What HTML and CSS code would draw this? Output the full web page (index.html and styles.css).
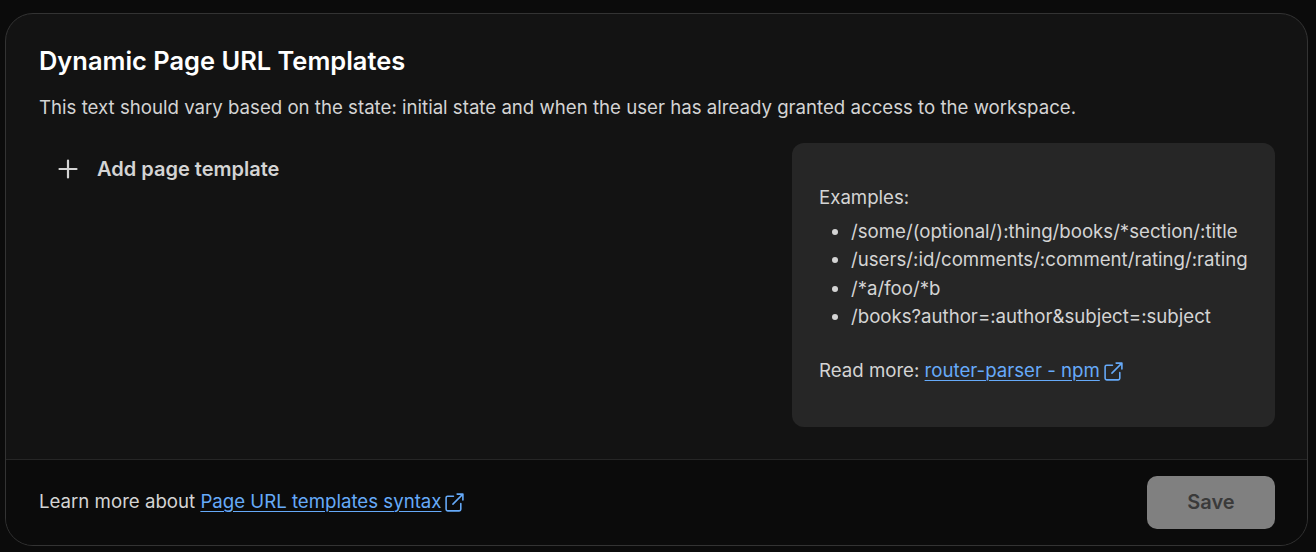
FILE: index.html
```html
<!DOCTYPE html>
<html lang="en">
<head>
    <meta charset="UTF-8">
    <meta name="viewport" content="width=device-width, initial-scale=1.0">
    <title>Dynamic Page URL Templates</title>
    <link rel="stylesheet" href="styles.css">
</head>
<body>
    <div class="card">
        <div class="card-body">
            <h2 class="title">Dynamic Page URL Templates</h2>
            <p class="description">This text should vary based on the state: initial state and when the user has already granted access to the workspace.</p>
            <div class="columns">
                <div class="templates">
                    <button class="add-button">
                        <svg class="plus-icon" viewBox="0 0 20 20" fill="none" stroke="currentColor" stroke-width="2.2" stroke-linecap="round">
                            <path d="M10 1.500v17M1.500 10h17"/>
                        </svg>
                        Add page template
                    </button>
                </div>
                <div class="examples">
                    <p class="examples-label">Examples:</p>
                    <ul class="examples-list">
                        <li>/some/(optional/):thing/books/*section/:title</li>
                        <li>/users/:id/comments/:comment/rating/:rating</li>
                        <li>/*a/foo/*b</li>
                        <li>/books?author=:author&amp;subject=:subject</li>
                    </ul>
                    <p class="read-more">Read more: <a href="#">router-parser - npm</a><svg class="external-icon" viewBox="0 0 20 20" fill="none" stroke="currentColor" stroke-width="1.5" stroke-linecap="round" stroke-linejoin="round"><path d="M9 4H3.5A1.5 1.5 0 0 0 2 5.500V16.500A1.500 1.500 0 0 0 3.500 18H14.500A1.500 1.500 0 0 0 16 16.500V11"/><path d="M12.500 2H18V7.500M18 2L8.500 11.500"/></svg></p>
                </div>
            </div>
        </div>
        <div class="card-footer">
            <p class="learn-more">Learn more about <a href="#">Page URL templates syntax</a><svg class="external-icon" viewBox="0 0 20 20" fill="none" stroke="currentColor" stroke-width="1.5" stroke-linecap="round" stroke-linejoin="round"><path d="M9 4H3.5A1.5 1.5 0 0 0 2 5.500V16.500A1.500 1.500 0 0 0 3.500 18H14.500A1.500 1.500 0 0 0 16 16.500V11"/><path d="M12.500 2H18V7.500M18 2L8.500 11.500"/></svg></p>
            <button class="save-button" disabled>Save</button>
        </div>
    </div>
</body>
</html>
```

FILE: styles.css
```css
* {
    box-sizing: border-box;
}

body {
    margin: 0;
    padding: 13px 8px 6px 5px;
    height: 552px;
    overflow: hidden;
    background-color: #0b0b0b;
    font-family: Inter, "Liberation Sans", sans-serif;
    color: #d4d4d4;
}

p {
    margin: 0;
}

a {
    color: #66aaf9;
    text-decoration: underline;
    text-underline-offset: 3px;
    text-decoration-thickness: 1px;
}

.card {
    height: 533px;
    display: flex;
    flex-direction: column;
    border: 1px solid #333;
    border-radius: 28px;
    overflow: hidden;
    background-color: #131313;
}

.card-body {
    flex: 1;
    padding: 29px 32px 32px 33px;
}

.title {
    margin: 0;
    font-size: 25.450px;
    line-height: 36px;
    font-weight: 600;
    color: #fff;
}

.description {
    margin-top: 16px;
    font-size: 18.650px;
    line-height: 24px;
}

.columns {
    display: flex;
    justify-content: space-between;
    margin-top: 24px;
}

.add-button {
    display: flex;
    align-items: center;
    gap: 19px;
    padding: 13px 19px;
    border: none;
    background: none;
    font-family: inherit;
    font-size: 20px;
    line-height: 26px;
    font-weight: 600;
    color: #d4d4d4;
}

.plus-icon {
    width: 20px;
    height: 20px;
}

.examples {
    width: 483px;
    height: 284px;
    padding: 42px 20px 0 27px;
    border-radius: 12px;
    background-color: #262626;
    font-size: 18.650px;
    line-height: 24px;
}

.examples-list {
    margin: 10px 0 0;
    padding-left: 32px;
}

.examples-list li {
    margin-bottom: 4.400px;
}

.read-more {
    margin-top: 30px;
}

.external-icon {
    width: 21px;
    height: 21px;
    margin-left: 3px;
    color: #66aaf9;
    vertical-align: -5px;
}

.card-footer {
    display: flex;
    align-items: center;
    justify-content: space-between;
    height: 86px;
    padding: 0 32px 0 33px;
    border-top: 1px solid #262626;
    background-color: #0b0b0b;
}

.learn-more {
    margin-top: -4px;
    font-size: 18.650px;
    line-height: 24px;
}

.save-button {
    width: 128px;
    height: 53px;
    padding: 0 0 2px;
    border: none;
    border-radius: 10px;
    background-color: #808080;
    font-family: inherit;
    font-size: 20px;
    font-weight: 600;
    color: #3a3a3a;
}
```
